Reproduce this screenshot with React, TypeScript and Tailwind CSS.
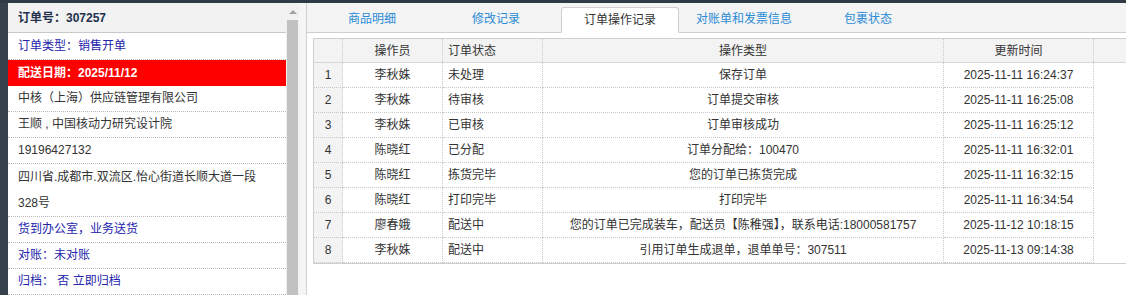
import React from "react";

const rows = [
  ["1", "李秋姝", "未处理", "保存订单", "2025-11-11 16:24:37"],
  ["2", "李秋姝", "待审核", "订单提交审核", "2025-11-11 16:25:08"],
  ["3", "李秋姝", "已审核", "订单审核成功", "2025-11-11 16:25:12"],
  ["4", "陈晓红", "已分配", "订单分配给：100470", "2025-11-11 16:32:01"],
  ["5", "陈晓红", "拣货完毕", "您的订单已拣货完成", "2025-11-11 16:32:15"],
  ["6", "陈晓红", "打印完毕", "打印完毕", "2025-11-11 16:34:54"],
  ["7", "廖春娥", "配送中", "您的订单已完成装车，配送员【陈稚强】，联系电话:18000581757", "2025-11-12 10:18:15"],
  ["8", "李秋姝", "配送中", "引用订单生成退单，退单单号：307511", "2025-11-13 09:14:38"],
];

const tabs = ["商品明细", "修改记录", "订单操作记录", "对账单和发票信息", "包裹状态"];

const App = () => {
  return (
    <div
      className="w-[1126px] h-[295px] flex flex-col overflow-hidden bg-white text-[12px] text-[#333]"
      style={{ fontFamily: '"Liberation Sans", "Noto Sans CJK SC", sans-serif' }}
    >
      {/* top bar */}
      <div className="h-[3px] bg-[#2f3a44]" />
      <div className="flex flex-1 min-h-0">
        <div className="w-[8px] bg-[#36414b]" />

        {/* order info */}
        <div className="w-[278px] flex flex-col">
          <div className="h-[32px] flex items-center px-[10px] bg-[#f2f2f2] border-b border-[#c8c8c8] font-bold text-[#22304d]">
            订单号：307257
          </div>
          <div className="px-[10px] leading-[26px] border-b border-dotted border-[#bbb] text-[#2424ad]">
            订单类型：销售开单
          </div>
          <div className="px-[10px] leading-[26px] bg-[#ff0000] text-white font-bold">
            配送日期：2025/11/12
          </div>
          <div className="px-[10px] leading-[25px] border-b border-dotted border-[#bbb]">
            中核（上海）供应链管理有限公司
          </div>
          <div className="px-[10px] leading-[25px] border-b border-dotted border-[#bbb]">
            王顺 , 中国核动力研究设计院
          </div>
          <div className="px-[10px] leading-[25px] border-b border-dotted border-[#bbb]">
            19196427132
          </div>
          <div className="px-[10px] leading-[26px] border-b border-dotted border-[#bbb]">
            四川省.成都市.双流区.怡心街道长顺大道一段
            <br />
            328号
          </div>
          <div className="px-[10px] leading-[25px] border-b border-dotted border-[#bbb] text-[#2424ad]">
            货到办公室，业务送货
          </div>
          <div className="px-[10px] leading-[25px] border-b border-dotted border-[#bbb] text-[#2424ad]">
            对账：未对账
          </div>
          <div className="px-[10px] leading-[25px] border-b border-dotted border-[#bbb] text-[#2424ad]">
            归档：&nbsp;否 立即归档
          </div>
        </div>

        {/* scrollbar */}
        <div className="w-[13px] bg-[#f1f1f1] flex flex-col items-center">
          <div className="h-[17px] flex items-center justify-center">
            <div className="w-0 h-0 border-l-[4px] border-r-[4px] border-b-[4px] border-l-transparent border-r-transparent border-b-[#a3a3a3]" />
          </div>
          <div className="flex-1 w-[11px] bg-[#c1c1c1]" />
        </div>
        <div className="w-[7px] bg-[#f5f5f5]" />

        {/* right panel */}
        <div className="flex-1 flex flex-col border-l border-[#d0d0d0] min-w-0">
          {/* tabs */}
          <div className="h-[30px] flex items-end gap-[6px] pl-[6px] bg-[#f4f4f4] border-b border-[#cfcfcf]">
            {tabs.map((t) =>
              t === "订单操作记录" ? (
                <div
                  key={t}
                  className="w-[118px] h-[26px] -mb-px flex items-center justify-center bg-white border border-[#cfcfcf] border-b-white rounded-t-[3px] text-[#333]"
                >
                  {t}
                </div>
              ) : (
                <div key={t} className="w-[118px] h-[26px] flex items-center justify-center text-[#2a8bd6]">
                  {t}
                </div>
              )
            )}
          </div>

          {/* grid */}
          <div className="mt-[5px] ml-[6px] border-t border-l border-b border-[#cfcfcf]">
            <div className="flex h-[24px] bg-[#f3f3f3] border-b border-[#d6d6d6]">
              <div className="w-[29px] shrink-0 border-r border-dotted border-[#c8c8c8]" />
              <div className="w-[100px] shrink-0 flex items-center justify-center border-r border-dotted border-[#c8c8c8]">
                操作员
              </div>
              <div className="w-[100px] shrink-0 flex items-center pl-[5px] border-r border-dotted border-[#c8c8c8]">
                订单状态
              </div>
              <div className="w-[401px] shrink-0 flex items-center justify-center border-r border-dotted border-[#c8c8c8]">
                操作类型
              </div>
              <div className="w-[150px] shrink-0 flex items-center justify-center border-r border-dotted border-[#c8c8c8]">
                更新时间
              </div>
              <div className="flex-1" />
            </div>
            {rows.map((r) => (
              <div key={r[0]} className="flex h-[25px]">
                <div className="w-[29px] shrink-0 flex items-center justify-center bg-[#f3f3f3] border-r border-b border-dotted border-[#c8c8c8]">
                  {r[0]}
                </div>
                <div className="w-[100px] shrink-0 flex items-center justify-center border-r border-b border-dotted border-[#c8c8c8]">
                  {r[1]}
                </div>
                <div className="w-[100px] shrink-0 flex items-center pl-[5px] border-r border-b border-dotted border-[#c8c8c8]">
                  {r[2]}
                </div>
                <div className="w-[401px] shrink-0 flex items-center justify-center whitespace-nowrap border-r border-b border-dotted border-[#c8c8c8]">
                  {r[3]}
                </div>
                <div className="w-[150px] shrink-0 flex items-center justify-center border-r border-b border-dotted border-[#c8c8c8]">
                  {r[4]}
                </div>
                <div className="flex-1" />
              </div>
            ))}
          </div>
        </div>
      </div>
    </div>
  );
};

export default App;
